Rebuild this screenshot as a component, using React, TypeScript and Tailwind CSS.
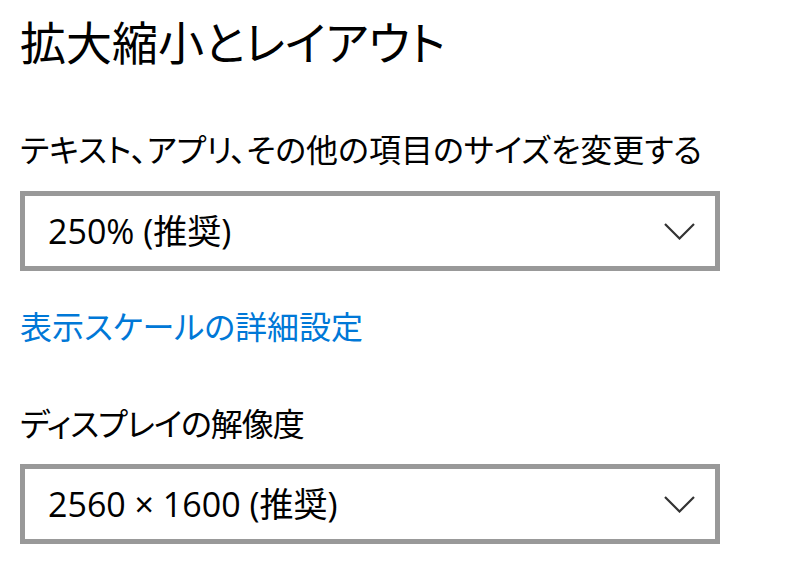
const jp = '"Noto Sans CJK JP", sans-serif';
const latin = '"Open Sans", "Noto Sans CJK JP", sans-serif';

function Chevron() {
  return (
    <svg width="31" height="17" viewBox="0 0 31 17" fill="none" className="shrink-0">
      <polyline points="1,1 15.5,15.5 30,1" stroke="#333333" strokeWidth="2.2" />
    </svg>
  );
}

function ComboBox({ value }: { value: string }) {
  return (
    <div className="box-border flex h-[80px] w-[700px] items-center justify-between border-[5px] border-[#999999] bg-white pl-[23px] pr-[20px]">
      <span className="text-[34px] leading-[40px] text-black" style={{ fontFamily: latin }}>
        {value}
      </span>
      <Chevron />
    </div>
  );
}

export default function App() {
  return (
    <div
      className="h-[575px] w-[800px] overflow-hidden bg-white pl-5 text-black"
      style={{ fontFamily: jp, fontFeatureSettings: '"palt"' }}
    >
      <h1 className="m-0 h-[82px] text-[46px] font-normal leading-[80px]">拡大縮小とレイアウト</h1>
      <p className="mt-[46px] text-[32px] leading-[40px]">テキスト、アプリ、その他の項目のサイズを変更する</p>
      <div className="mt-[23px]">
        <ComboBox value="250% (推奨)" />
      </div>
      <a className="mt-[34px] block text-[32px] leading-[40px] text-[#0078d7]">表示スケールの詳細設定</a>
      <p className="mt-[57px] text-[32px] leading-[40px] tracking-[-1px]">ディスプレイの解像度</p>
      <div className="mt-[22px]">
        <ComboBox value="2560 × 1600 (推奨)" />
      </div>
    </div>
  );
}
